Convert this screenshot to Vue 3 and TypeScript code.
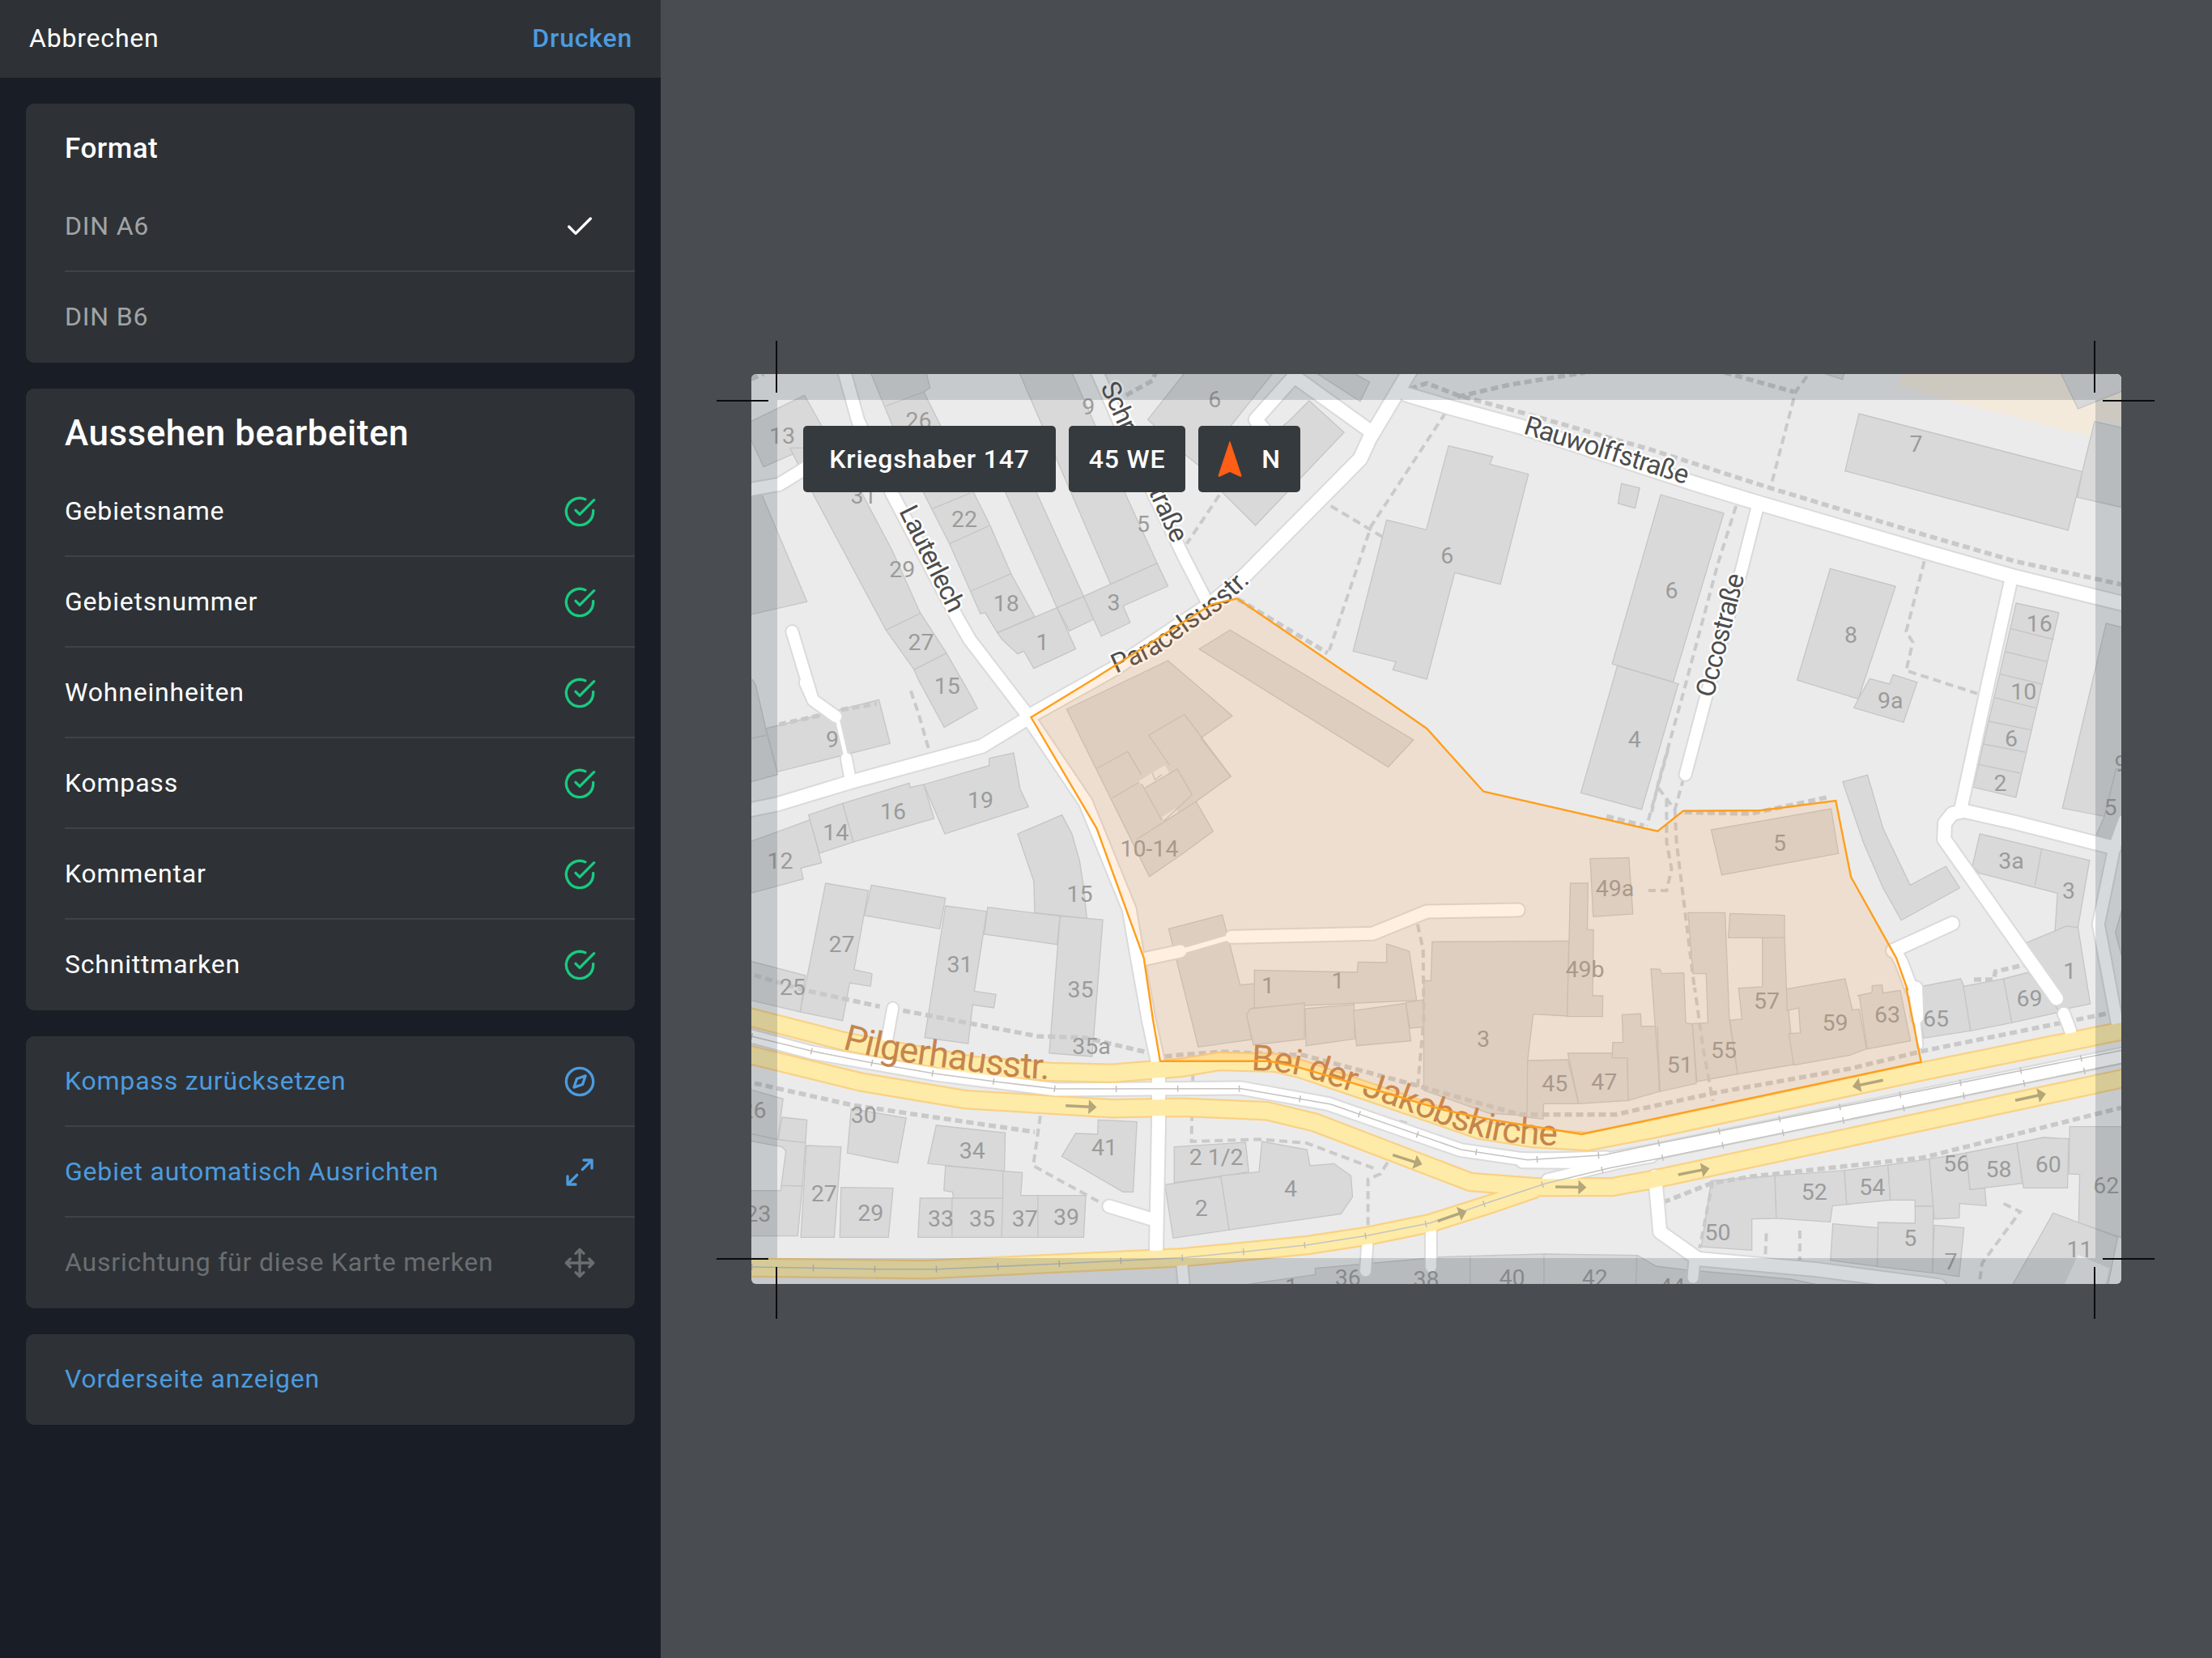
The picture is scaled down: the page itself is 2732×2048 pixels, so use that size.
<script setup lang="ts">
type Pt = [number, number]

// Survey sheets: origin on the map plus the digitising scale of each sheet.
const sheets: Record<string, { x: number; y: number; sx: number; sy: number }> = {
  A: { x: 880, y: 410, sx: 2.6133, sy: 3 },
  B: { x: 1460, y: 410, sx: 2.6133, sy: 3 },
  C: { x: 2040, y: 410, sx: 2.45, sy: 3 },
  D: { x: 880, y: 840, sx: 2.6133, sy: 3 },
  E: { x: 1460, y: 840, sx: 2.6133, sy: 3 },
  F: { x: 2040, y: 840, sx: 2.45, sy: 3 },
  G: { x: 880, y: 1220, sx: 2.6133, sy: 3 },
  H: { x: 1460, y: 1220, sx: 2.6133, sy: 3 },
  I: { x: 2040, y: 1220, sx: 2.45, sy: 3 },
}

// "A 10,20 30,40 B 5,6" -> points in map space; a letter switches the sheet.
function points(src: string): Pt[] {
  let s = sheets.A
  const out: Pt[] = []
  for (const tok of src.trim().split(/\s+/)) {
    if (sheets[tok]) {
      s = sheets[tok]
      continue
    }
    const [px, py] = tok.split(',').map(Number)
    out.push([+(s.x + px / s.sx - 928).toFixed(1), +(s.y + py / s.sy - 462).toFixed(1)])
  }
  return out
}
const line = (src: string) => 'M' + points(src).map((p) => p.join(' ')).join('L')
const area = (src: string) => line(src) + 'Z'

// Smooth curve through the points, used as a baseline for street names.
function curve(src: string): string {
  const p = points(src)
  if (p.length < 3) return line(src)
  let d = `M${p[0][0]} ${p[0][1]}`
  for (let i = 0; i < p.length - 1; i++) {
    const a = p[Math.max(i - 1, 0)]
    const b = p[i]
    const c = p[i + 1]
    const e = p[Math.min(i + 2, p.length - 1)]
    d += `C${b[0] + (c[0] - a[0]) / 6} ${b[1] + (c[1] - a[1]) / 6} ${c[0] - (e[0] - b[0]) / 6} ${c[1] - (e[1] - b[1]) / 6} ${c[0]} ${c[1]}`
  }
  return d
}

const cream = area('C 755,150 1425,150 1425,342 1340,325 1330,385 1310,382 750,205')

const buildings = [
  'A 100,345 297,235 375,395 165,500 100,340',
  'A 100,590 160,605 305,1000 100,1053',
  'A 510,150 690,150 702,208 682,222 735,345 845,600 895,715 965,900 1040,1055 920,1115 880,1040 865,1045 765,785 680,593 580,345',
  'A 250,430 410,430 480,593 580,810 670,1040 755,1190 835,1350 D 855,105 748,175 665,0 A 650,1250 560,1105 450,870 320,590',
  'A 920,1115 1112,1022 1172,1175 1037,1247 1005,1183 985,1193 935,1140',
  'A 1112,1022 1198,980 1230,1065 1152,1108',
  'A 1198,980 1435,857 1470,942 1325,1015 1348,1077 1255,1128 1230,1065',
  'A 870,400 970,400 1045,593 1198,980 1112,1022 945,593',
  'A 990,150 1160,150 1330,593 1435,857 1285,935',
  'A 1405,325 1525,150 B 295,150 100,430 60,500 A 1520,450',
  'B 410,255 523,372 237,717 100,560 345,330',
  'B 430,150 550,150 605,185 575,257',
  'B 860,422 1003,462 993,490 1118,527 1027,935 880,892 790,1287 680,1252 690,1223 552,1183 660,697 788,733',
  'B 1418,562 1477,578 1462,653 1407,635',
  'B 1545,603 C 218,672 65,1297 B 1388,1230',
  'B 1405,1237 C 83,1305 F 80,15 E 1483,480 1287,418',
  'B 155,1105 E 747,222 665,322 B 55,1175',
  'C 627,303 1303,518 1260,735 585,515',
  'C 1340,332 1430,357 1430,652 1288,613 1303,518',
  'C 1235,145 1430,145 1430,216 1290,285',
  'C 500,145 585,145 577,176',
  'C 540,877 738,943 F 625,70 440,0',
  'C 660,1285 720,1305 730,1270 803,1298 F 762,157 612,103 625,70',
  'C 1103,1005 1232,1040 F 1102,435 973,397',
  'C 1375,1080 1430,1097 F 1430,330 1405,330 1370,505 1243,475',
  'F 1405,330 1430,330 1430,480 1390,590 1345,575 1370,505',
  'F 1430,820 1430,1060 1403,935',
  'F 578,377 653,352 700,550 782,760 890,690 932,770 755,890 700,770 640,600',
  'F 993,570 1325,668 1290,915 1220,935 1228,790 990,715 970,690',
  'F 1130,975 1255,912 1290,917 1327,1200 1190,1235 1200,1100',
  'F 797,1140 935,1107 945,1135 I 965,160 823,187',
  'F 943,1135 1065,1107 I 1090,130 965,160',
  'F 1065,1107 1140,1083 1235,1230 I 1090,130',
  'D 100,0 130,0 140,20 172,180 210,350 100,385',
  'D 172,180 537,73 573,235 210,340',
  'D 100,608 315,518 352,677 285,697 293,737 100,797',
  'D 310,500 420,457 455,600 345,642',
  'D 420,457 635,382 637,398 682,387 715,513 455,600',
  'D 682,387 893,317 893,290 972,270 993,405 1020,470 750,570',
  'D 985,570 1128,500 1160,570 1185,670 1197,760 1208,883 1040,862 1037,745',
  'D 365,753 503,780 457,1073 515,1088 510,1135 443,1122 420,1262 283,1230',
  'D 513,760 752,808 733,922 490,872',
  'D 752,837 885,857 845,1153 915,1165 908,1215 840,1203 G 825,207 685,185',
  'D 888,842 1122,875 1112,980 877,942',
  'D 1122,875 1260,888 G 1225,255 1087,243',
  'D 100,1035 300,1095 283,1230 100,1180',
  'D 1143,108 A 1470,1218 E 162,133 60,215 157,357 45,450 100,560 0,645 D 1410,728',
  'D 1472,922 E 130,870 187,1130 235,1125 235,1210 H 208,100 225,192 52,220 E 0,1120 D 1485,980',
  'E 233,1075 565,1083 568,1045 660,1047 660,978 733,1005 757,1187 233,1215',
  'H 220,78 395,57 395,190 230,212 208,100',
  'H 397,78 555,62 557,190 400,215',
  'H 553,85 722,58 738,197 563,215',
  'H 722,55 778,45 785,145 735,150',
  'E 807,970 1248,967 H 1243,105 1133,98 1115,270 1115,475 990,465 780,380 E 780,1113 803,1115',
  'H 1115,270 1245,267 1280,430 1167,430 1165,487 1113,480',
  'H 1245,243 1388,243 1437,260 1440,418 1280,430',
  'E 1317,662 1442,658 1455,867 1327,877',
  'E 1253,753 1310,753 1308,925 1328,925 1325,1170 1358,1170 1357,1247 1243,1247 1250,925',
  'H 1420,100 1480,97 1482,143 1533,143 1540,385 1440,418 1437,260 1388,260 1390,203 1423,203',
  'E 1513,1070 F 25,1072 30,1088 97,1085 I 103,130 123,135 135,355 H 1543,385',
  'F 110,862 222,862 I 235,118 260,320 137,348 123,133 170,130 F 165,1088 125,1088',
  'F 237,865 402,872 402,955 232,955',
  'F 335,955 402,955 408,1145 I 430,285 260,320 237,120 273,117 F 263,1142 335,1137',
  'F 408,1145 585,1107 I 607,82 628,80 650,227 600,250 430,287 415,170 450,168 445,75 410,85',
  'F 622,1170 667,1158 667,1133 697,1130 700,1160 752,1150 I 783,197 652,227 628,30',
  'F 180,555 543,477 565,643 212,722',
  'G 100,370 228,412 210,563 100,535',
  'G 225,480 305,490 300,575 212,563',
  'G 100,535 210,563 300,575 290,735 222,733 237,605 225,590 100,563',
  'G 100,752 220,752 222,733 290,735 275,920 100,920',
  'G 303,585 415,590 393,925 285,925',
  'G 415,740 583,743 568,925 411,925',
  'G 448,448 625,483 598,650 435,613',
  'G 722,510 945,538 942,680 695,652',
  'G 752,660 942,680 1000,685 995,770 1205,770 1198,925 663,925 670,780 777,780 775,757 747,752',
  'G 1245,490 1370,497 1358,757 1325,757 1127,625 1172,540 1243,543',
  'G 1490,590 H 205,573 215,683 G 1490,723',
  'G 1460,730 H 125,700 152,898 G 1487,928',
  'H 125,698 248,682 258,570 403,600 413,660 490,652 545,697 550,775 513,838 152,898',
  'H 180,1105 430,1063 430,1040 850,997 1170,987 1470,992 1530,1032 I 100,1045 420,1080 520,1105',
  'I 180,715 373,697 377,855 303,857 303,973 150,960',
  'I 373,697 583,677 590,803 547,808 540,868 377,855',
  'I 583,677 715,657 722,787 590,803',
  'I 715,657 840,635 852,810 797,810 797,787 722,787',
  'I 840,635 952,612 963,748 1008,742 1012,808 932,800 930,853 855,857',
  'I 952,612 1105,575 1122,725 963,748',
  'I 1105,575 1185,555 1262,560 1258,742 1125,742',
  'I 1265,515 1430,515 1430,930 1292,870 1295,692 1262,690',
  'I 685,870 797,873 797,810 852,810 850,1057 682,1033',
  'I 548,875 685,890 682,1033 541,1010',
  'I 855,880 945,890 930,1070 850,1057',
  'I 1215,835 1410,925 1380,1105 1090,1105',
].map(area)

const courtyards = [
  'I 1247,1105 1290,990 1385,1040 1372,1105',
  'D 1375,375 1460,315 1475,345 1395,400',
  'D 1450,508 1495,475 1502,490 1457,522',
].map(area)

const dividers = [
  'A 560,275 682,222', 'A 710,655 830,598', 'A 765,785 895,717', 'A 835,960 965,895',
  'A 560,1105 670,1043', 'A 650,1252 755,1190',
  'C 1088,1100 1217,1140', 'C 1070,1185 1197,1222', 'C 1055,1268 1180,1305',
  'F 1037,65 1162,103', 'F 1020,153 1147,185', 'F 1003,237 1130,267', 'F 990,313 1115,345',
  'F 1180,625 1160,760', 'D 100,222 172,205',
  'D 1475,315 1408,205 1523,127 E 157,357', 'D 1240,328 1340,265 1385,352', 'D 1290,437 1375,380',
  'D 1385,385 1450,520', 'D 1395,400 1500,330 1548,425 1457,522', 'D 1370,590 E 45,450', 'D 1420,345 1428,370 1450,350',
  'G 773,780 773,925', 'G 937,680 937,780 933,925', 'G 773,780 937,780', 'G 1050,770 1050,925',
  'H 930,993 930,1105', 'H 1168,987 1168,1105', 'H 1468,995 1465,1105', 'I 17,143 25,385',
].map(line)

const roads: { d: string; w: number }[] = [
  ['A 425,145 470,330 580,600 790,1060 830,1140 D 960,45 1020,135', 15],
  ['A 100,588 215,565 300,505 520,380', 15],
  ['A 257,1110 320,1350 D 300,10 325,75 398,135', 14],
  ['D 405,155 428,270', 5],
  ['D 432,290 445,370', 13],
  ['D 90,488 209,460 445,378 870,245 1020,140', 16],
  ['D 1020,135 A 1300,1245 B 90,1010 200,905 575,470 605,395 735,145', 17],
  ['A 1240,145 1330,380 1440,640 1520,830 B 85,1010', 14],
  ['B 270,370 237,325 362,165 610,370', 16],
  ['B 725,232 860,278 1090,350 C 130,562 320,633 830,815 1090,905 1430,1008', 17],
  ['C 322,640 270,890 F 165,60 102,350', 14],
  ['C 1088,915 F 1020,0 935,480', 15],
  ['F 1225,1180 885,590 887,530 910,495 945,485 1100,528 1400,622', 16],
  ['F 1247,1240 I 1247,95 1267,160', 14],
  ['F 1430,520 1400,620 1352,905 I 1408,130', 14],
  ['F 910,902 730,1003', 16],
  ['F 735,1000 755,1045 788,1150 I 800,0 803,110', 15],
  ['I 803,110 812,215', 6],
  ['D 1020,140 1205,455 1345,850 1372,1030 G 1408,120 1440,290 1440,500 1432,970', 16],
  ['G 1280,810 1425,860', 15],
  ['G 582,75 560,215', 13],
  ['G 100,172 320,240 715,320 1110,378 H 190,372 470,430 900,602 1115,638 1370,630', 15],
  ['H 1100,640 1360,643 I 0,610 1430,250', 18],
  ['H 1180,712 1400,650 I 0,625', 14],
  ['G 1515,1020 1522,1110', 13],
  ['H 598,950 592,1050', 13],
  ['H 803,890 803,1035', 13],
  ['I 10,700 25,905 140,1005 500,1045 870,1105', 16],
  ['I 130,1000 125,1075', 13],
  ['D 1400,1032 1510,1005', 15],
  ['D 1520,1003 E 140,958', 6],
  ['E 160,952 615,940 790,858 1085,852', 15],
].map(([d, w]) => ({ d: line(d as string), w: w as number }))

const mainRoads = [
  'G 90,100 430,200 840,288 1090,312 1290,317 H 0,296 120,273 300,278 380,300 600,385 960,527 1130,558 1310,570 I 0,525 820,310 1430,158',
  'G 90,240 480,350 820,415 1290,448 H 0,443 275,457 430,500 930,720 1140,739 1390,738 I 0,712 1430,335',
  'G 90,1037 480,1042 690,1045 H 0,1000 400,955 600,920 800,873 1000,800 1140,745',
].map(line)

const rails = [
  'G 125,180 320,235 520,280 715,318 912,348 1110,375 H 190,374 480,432 900,600 1115,638 1360,620 I 0,582 1430,230',
  'G 125,1035 530,1043 725,1043 1120,1023 H 10,1000 205,978 405,953 600,918 800,872 985,797 1175,725 1380,668 I 0,638 1430,278',
].map(line)

const footways = [
  'B 735,210 790,190 890,235 1100,300 C 0,437 350,575 820,750 1100,850 1430,938',
  'B 890,240 1060,195 1300,150', 'C 220,150 430,222',
  'A 1335,235 1420,180 1430,150', 'A 125,175 165,155', 'B 180,990 470,1190',
  'D 215,165 350,130', 'D 415,110 530,88',
  'D 100,1082 300,1150 540,1210', 'G 615,85 1050,180 1200,185 1405,240',
  'G 1460,255 H 0,248 130,238 390,250 750,360 1090,470 1400,470 I 0,440 190,390 600,300 820,235 1200,140 1380,95',
  'G 100,345 450,435 1040,535', 'I 35,795 180,725 300,700 820,630 1430,442',
  'F 100,490 300,495 530,435', 'E 1370,505 1490,540', 'F 975,1110 1035,1110 1040,1080 1130,1055',
].map(line)

const paths = [
  'C 470,165 435,222 360,575', 'C 255,645 200,860 95,1340 F 20,380 0,490', 'F 20,400 70,480 95,370',
  'C 825,850 770,1110 790,1150 770,1255 985,1340', 'B 850,300 610,720 475,1180', 'B 480,645 655,765',
  'B 120,605 15,785', 'E 1568,260 1500,540', 'F 45,440 45,600 60,700 45,780 E 1505,780',
  'F 70,480 75,600 130,1150 I 130,0 155,220 185,420', 'E 760,905 778,1000 H 780,120 760,370',
  'D 640,40 665,125 700,265', 'G 1058,475 1035,660 1250,795',
  'H 35,320 30,570 250,562 400,575 620,670', 'H 600,880 600,710 640,690 700,580', 'H 700,495 740,507',
  'I 185,715 145,965', 'I 347,910 343,1015', 'I 448,900 448,1030', 'I 1065,800 1115,830 1000,1020 990,1105',
].map(line)

const arrows = [
  'G 1140,437 1240,443', 'H 680,620 775,655', 'H 825,865 918,828', 'H 1205,738 1305,740',
  'I 700,343 607,367', 'I 1100,418 1193,393', 'I 80,693 175,670',
].map((s) => {
  const [a, b] = points(s)
  return {
    len: Math.hypot(b[0] - a[0], b[1] - a[1]),
    t: `translate(${a[0]} ${a[1]}) rotate(${(Math.atan2(b[1] - a[1], b[0] - a[0]) * 180) / Math.PI})`,
  }
})

const territory = area(
  'D 1028,138 A 1225,1290 1568,1040 B 95,1010 178,988 640,1350 E 790,180 973,413 1535,560 F 95,485 330,483 557,447 603,730 717,980 740,1030 775,1150 I 770,0 815,275 0,488 H 1290,543 1000,490 850,455 540,350 360,290 280,272 G 1445,272 D 1422,1260 1392,1030 1240,550',
)

const numbers = (
  'A|13|225,385;26|665,328;9|1213,275;31|487,605;22|813,692;5|1390,710;29|612,880;18|948,1005;3|1295,1003;27|673,1150;1|1065,1150;15|757,1310 ' +
  'B|6|105,250;6|855,827 C|6|60,957;7|800,413;8|603,1122;16|1173,1080;10|1125,1333 ' +
  'D|9|387,220;19|865,445;16|583,487;14|398,563;12|218,668;15|1185,793;27|417,977;31|798,1052;35|1188,1147;25|258,1137;10-14|1410,623 ' +
  'E|4|1460,220;49a|1397,770;49b|1300,1070;1|277,1130;1|503,1112 ' +
  'F|9a|722,75;6|1088,215;2|1055,380;3a|1088,670;3|1262,780;1|1265,1077;69|1143,1180;5|387,603;57|348,1187;5|1388,470;9|1420,308 ' +
  'G|35a|1223,215;26|132,452;30|488,472;27|360,763;23|147,837;29|510,833;33|737,855;35|870,855;37|1008,855;39|1142,850;34|838,602;41|1265,590 ' +
  'H|2_1/2|110,627;2|62,815;4|350,745;3|972,190;45|1203,355;47|1362,348;36|535,1073;38|788,1080;40|1065,1073;42|1332,1073;1|353,1107 ' +
  'I|51|85,285;55|218,230;59|555,130;63|713,100;65|860,113;52|492,755;54|667,738;56|922,652;58|1050,672;60|1200,655;62|1375,733;50|200,907;5|782,927;7|905,1015;11|1295,970;44|62,1107'
)
  .split(' ')
  .flatMap((group) => {
    const sheet = group[0]
    return group.slice(2).split(';').map((item) => {
      const [text, at] = item.split('|')
      const [p] = points(`${sheet} ${at}`)
      return { text: text.replace('_', ' '), x: p[0], y: p[1] + 10 }
    })
  })

const streets = [
  { id: 's1', name: 'Lauterlech', d: curve('A 601,664 763,1042'), len: 142, big: false },
  { id: 's2', name: 'Schroeckstraße', d: curve('A 1251,203 1485,787'), len: 214, big: false },
  { id: 's3', name: 'Paracelsusstr.', d: curve('A 1303,1266 1438,1192 B 15,1114 120,1030 214,933'), len: 202, big: false },
  { id: 's4', name: 'Rauwolffstraße', d: curve('B 1099,376 C 102,564'), len: 211, big: false },
  { id: 's5', name: 'Occostraße', d: curve('F 186,68 C 281,902'), len: 156, big: false },
  { id: 's6', name: 'Pilgerhausstr.', d: curve('G 418,226 560,264 800,304 950,328 1095,340'), len: 259, big: true },
  { id: 's7', name: 'Bei der Jakobskirche', d: curve('H 222,305 360,320 515,373 700,446 870,519 1000,563 1110,579 1215,585'), len: 392, big: true },
]

const formats = [
  { label: 'DIN A6', selected: true },
  { label: 'DIN B6', selected: false },
]
const options = ['Gebietsname', 'Gebietsnummer', 'Wohneinheiten', 'Kompass', 'Kommentar', 'Schnittmarken']
</script>

<template>
  <div class="screen">
    <aside class="sidebar">
      <header class="topbar">
        <span>Abbrechen</span>
        <span class="print">Drucken</span>
      </header>
      <div class="cards">
        <section class="card">
          <h3 class="title">Format</h3>
          <div v-for="f in formats" :key="f.label" class="row muted">
            <span>{{ f.label }}</span>
            <svg v-if="f.selected" class="icon check" viewBox="0 0 24 24"><path d="M20 6 9 17l-5-5" /></svg>
          </div>
        </section>
        <section class="card">
          <h2 class="title large">Aussehen bearbeiten</h2>
          <div v-for="o in options" :key="o" class="row">
            <span>{{ o }}</span>
            <svg class="icon ok" viewBox="0 0 24 24">
              <path d="M22 11.08V12a10 10 0 1 1-5.93-9.14" />
              <path d="M22.6 3.4 12 14.01l-3-3" />
            </svg>
          </div>
        </section>
        <section class="card">
          <div class="row link">
            <span>Kompass zurücksetzen</span>
            <svg class="icon" viewBox="0 0 24 24">
              <circle cx="12" cy="12" r="10" />
              <path d="m16.24 7.76-2.12 6.36-6.36 2.12 2.12-6.36z" />
            </svg>
          </div>
          <div class="row link">
            <span>Gebiet automatisch Ausrichten</span>
            <svg class="icon" viewBox="0 0 24 24"><path d="M15 3h6v6M9 21H3v-6M21 3l-7 7M3 21l7-7" /></svg>
          </div>
          <div class="row disabled">
            <span>Ausrichtung für diese Karte merken</span>
            <svg class="icon" viewBox="0 0 24 24">
              <path d="m5 9-3 3 3 3M9 5l3-3 3 3M15 19l-3 3-3-3M19 9l3 3-3 3M2 12h20M12 2v20" />
            </svg>
          </div>
        </section>
        <section class="card">
          <div class="row link"><span>Vorderseite anzeigen</span></div>
        </section>
      </div>
    </aside>

    <main class="stage">
      <div class="sheet">
        <svg class="map" viewBox="0 0 1692 1124" width="1692" height="1124">
          <rect width="1692" height="1124" fill="#ebebeb" />
          <path :d="cream" fill="#f3eadc" />
          <g class="building"><path v-for="(d, i) in buildings" :key="i" :d="d" /></g>
          <g fill="#ebebeb"><path v-for="(d, i) in courtyards" :key="i" :d="d" /></g>
          <g class="divider"><path v-for="(d, i) in dividers" :key="i" :d="d" /></g>
          <g class="footway"><path v-for="(d, i) in footways" :key="i" :d="d" /></g>
          <g class="path"><path v-for="(d, i) in paths" :key="i" :d="d" /></g>
          <g class="road casing">
            <path v-for="(r, i) in roads" :key="i" :d="r.d" :stroke-width="r.w + 4" />
          </g>
          <g class="main-casing"><path v-for="(d, i) in mainRoads" :key="i" :d="d" /></g>
          <g class="road fill"><path v-for="(r, i) in roads" :key="i" :d="r.d" :stroke-width="r.w" /></g>
          <g class="main-fill"><path v-for="(d, i) in mainRoads" :key="i" :d="d" /></g>
          <g class="rail"><path v-for="(d, i) in rails" :key="i" :d="d" /></g>
          <g class="ties"><path v-for="(d, i) in rails" :key="i" :d="d" /></g>
          <g v-for="(a, i) in arrows" :key="i" :transform="a.t" class="arrow">
            <path :d="`M0 0H${a.len - 8}`" />
            <path :d="`M${a.len} 0l-10 -9v18z`" class="head" />
          </g>
          <text v-for="(n, i) in numbers" :key="i" class="number" :x="n.x" :y="n.y">{{ n.text }}</text>
          <g v-for="s in streets" :key="s.id">
            <path :id="s.id" :d="s.d" fill="none" />
            <text class="street" :class="{ big: s.big }">
              <textPath :href="'#' + s.id" :textLength="s.len" lengthAdjust="spacing">{{ s.name }}</textPath>
            </text>
          </g>
          <path :d="territory" class="territory" />
        </svg>
        <div class="bleed"></div>
        <div class="badges">
          <div class="badge name">Kriegshaber 147</div>
          <div class="badge">45 WE</div>
          <div class="badge compass">
            <svg viewBox="0 0 30 46" width="30" height="46">
              <path d="M15 1.500 29 43.500Q29.200 45 27.500 44.300L15 38.500 2.500 44.300Q.8 45 1 43.500Z" fill="#fe5e15" stroke="#fe5e15" stroke-linejoin="round" />
            </svg>
            <span>N</span>
          </div>
        </div>
        <i class="mark v left top"></i>
        <i class="mark h left top"></i>
        <i class="mark v right top"></i>
        <i class="mark h right top"></i>
        <i class="mark v left bottom"></i>
        <i class="mark h left bottom"></i>
        <i class="mark v right bottom"></i>
        <i class="mark h right bottom"></i>
      </div>
    </main>
  </div>
</template>

<style>
body {
  margin: 0;
  overflow: hidden;
}
</style>

<style scoped>
.screen {
  display: flex;
  width: 2732px;
  height: 2048px;
  background: #494c50;
  font-family: Roboto, sans-serif;
  font-size: 32px;
  letter-spacing: 0.8px;
  color: #fff;
}
.sidebar {
  width: 816px;
  flex: none;
  background: #191d25;
}
.topbar {
  box-sizing: border-box;
  height: 96px;
  padding: 0 35px 2px 36px;
  display: flex;
  align-items: center;
  justify-content: space-between;
  background: #2e3236;
}
.print {
  color: #4c9bdf;
  font-weight: 500;
}
.cards {
  display: flex;
  flex-direction: column;
  gap: 32px;
  padding: 32px;
}
.card {
  border-radius: 10px;
  background: #2e3236;
  overflow: hidden;
}
.title {
  box-sizing: border-box;
  height: 96px;
  margin: 0;
  padding: 0 48px;
  font-size: 35px;
  line-height: 112px;
  letter-spacing: 0.5px;
  font-weight: 500;
}
.title.large {
  font-size: 44px;
  line-height: 111px;
}
.row {
  box-sizing: border-box;
  height: 112px;
  margin-left: 48px;
  padding-right: 48px;
  display: flex;
  align-items: center;
  justify-content: space-between;
  border-bottom: 2px solid #3e4347;
}
.row:last-child {
  border-bottom-color: transparent;
}
.muted {
  color: #a1a4a6;
}
.link {
  color: #4c9bdf;
}
.disabled {
  color: #6a6e71;
}
.icon {
  width: 40px;
  height: 40px;
  margin-top: 2px;
  fill: none;
  stroke: currentColor;
  stroke-width: 2;
  stroke-linecap: round;
  stroke-linejoin: round;
}
.check {
  color: #fff;
}
.ok {
  color: #16cc80;
}
.stage {
  flex: 1;
  display: flex;
  align-items: center;
  justify-content: center;
}
.sheet {
  position: relative;
  width: 1692px;
  height: 1124px;
}
.map {
  display: block;
  border-radius: 6px;
}
.bleed {
  position: absolute;
  inset: 0;
  box-sizing: border-box;
  border: 32px solid rgba(54, 70, 82, 0.2);
  border-radius: 6px;
}
.badges {
  position: absolute;
  left: 64px;
  top: 64px;
  display: flex;
  gap: 16px;
}
.badge {
  box-sizing: border-box;
  height: 82px;
  width: 144px;
  display: flex;
  align-items: center;
  justify-content: center;
  border-radius: 5px;
  background: #353a3e;
  font-weight: 500;
}
.badge.name {
  width: 312px;
}
.badge.compass {
  width: 126px;
  gap: 24px;
}
.mark {
  position: absolute;
  background: #0b0d0f;
}
.v {
  width: 2px;
  height: 64px;
}
.h {
  width: 64px;
  height: 2px;
}
.v.left {
  left: 30px;
}
.v.right {
  left: 1658px;
}
.v.top {
  top: -41px;
}
.v.bottom {
  top: 1103px;
}
.h.left {
  left: -43px;
}
.h.right {
  left: 1669px;
}
.h.top {
  top: 32px;
}
.h.bottom {
  top: 1092px;
}
.building {
  fill: #d9d9d9;
  stroke: #c5c5c5;
  stroke-width: 1.3;
}
.divider {
  fill: none;
  stroke: #c5c5c5;
  stroke-width: 1.3;
}
.footway {
  fill: none;
  stroke: #c9c9c9;
  stroke-width: 5.5;
  stroke-dasharray: 9 5;
}
.path {
  fill: none;
  stroke: #cacaca;
  stroke-width: 4;
  stroke-dasharray: 10 6;
}
.road {
  fill: none;
  stroke-linecap: round;
  stroke-linejoin: round;
}
.casing {
  stroke: #dadada;
}
.fill {
  stroke: #fff;
}
.main-casing {
  fill: none;
  stroke: #fad184;
  stroke-width: 24.5;
  stroke-linejoin: round;
}
.main-fill {
  fill: none;
  stroke: #feeba8;
  stroke-width: 20;
  stroke-linejoin: round;
}
.rail {
  fill: none;
  stroke: #c6c4c0;
  stroke-width: 1.6;
}
.ties {
  fill: none;
  stroke: #c0bebb;
  stroke-width: 8;
  stroke-dasharray: 1.5 74.5;
}
.arrow {
  fill: none;
  stroke: #b4a67a;
  stroke-width: 3.5;
}
.head {
  fill: #b4a67a;
  stroke: none;
}
.number {
  font-size: 28.5px;
  letter-spacing: 0;
  fill: #9b9b9b;
  text-anchor: middle;
}
.street {
  font-size: 33px;
  letter-spacing: 0;
  fill: #4d4d4d;
  stroke: #fff;
  stroke-width: 5;
  stroke-linejoin: round;
  paint-order: stroke;
}
.street.big {
  font-size: 44.5px;
  fill: #c5854d;
  stroke: none;
}
.territory {
  fill: rgba(255, 145, 50, 0.145);
  stroke: #ff9f1c;
  stroke-width: 2.4;
}
</style>
